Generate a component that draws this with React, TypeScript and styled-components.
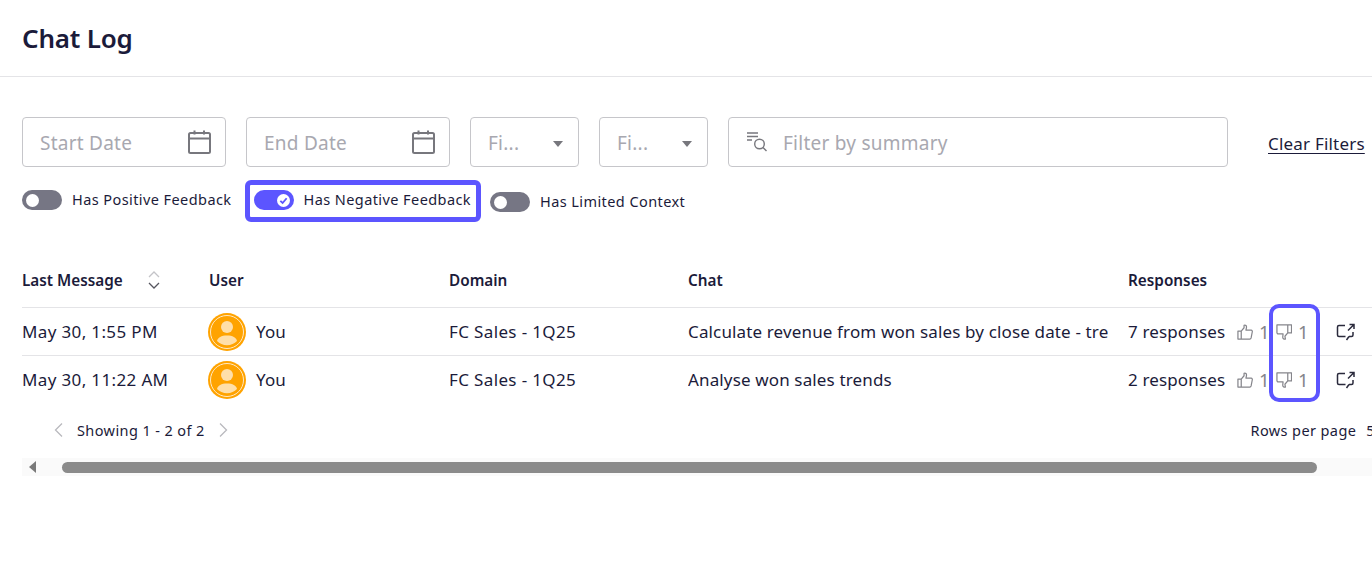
import React from 'react';
import styled, { createGlobalStyle } from 'styled-components';

const colors = {
  ink: '#1b1b3a',
  line: '#e4e4e7',
  border: '#c6c6ca',
  placeholder: '#a8a8b0',
  icon: '#77777d',
  count: '#85858b',
  toggle: '#767684',
  accent: '#5c55ff',
  orange: '#ffa300',
  peach: '#ffdfa9',
};

const GlobalStyle = createGlobalStyle`
  html, body {
    margin: 0;
    padding: 0;
    background: #fff;
    overflow: hidden;
  }
  body {
    font-family: "Noto Sans", "Liberation Sans", sans-serif;
    color: ${colors.ink};
  }
`;

const Page = styled.div`
  width: 1372px;
  height: 563px;
  overflow: hidden;
`;

const Header = styled.header`
  display: flex;
  align-items: center;
  height: 76px;
  padding: 0 22px;
  border-bottom: 1px solid ${colors.line};
`;

const Title = styled.h1`
  margin: 0;
  font-size: 26px;
  font-weight: 600;
  letter-spacing: -0.2px;
  color: ${colors.ink};
`;

const Content = styled.main`
  padding: 40px 0 0 22px;
`;

const FilterRow = styled.div`
  display: flex;
  align-items: center;
  gap: 20px;
  height: 50px;
`;

const Field = styled.div<{ $width: number }>`
  display: flex;
  align-items: center;
  box-sizing: border-box;
  width: ${(p) => p.$width}px;
  height: 50px;
  padding: 0 14px 0 17px;
  border: 1px solid ${colors.border};
  border-radius: 4px;
  font-size: 19px;
  letter-spacing: 0.25px;
  color: ${colors.placeholder};
`;

const FieldText = styled.span`
  flex: 1;
  padding-top: 2px;
  white-space: nowrap;
`;

const Caret = styled.span`
  width: 0;
  height: 0;
  margin: 3px 1px 0 0;
  border-left: 5px solid transparent;
  border-right: 5px solid transparent;
  border-top: 6px solid ${colors.icon};
`;

const CalendarSvg = styled.svg`
  flex: none;
  margin-top: -2px;
`;

const SummaryIcon = styled.svg`
  flex: none;
  margin-right: 15px;
`;

const ClearLink = styled.a`
  margin-left: 20px;
  padding-top: 2px;
  font-size: 17px;
  letter-spacing: 0.2px;
  color: ${colors.ink};
  text-decoration: underline;
  text-underline-offset: 3px;
  white-space: nowrap;
`;

const ToggleRow = styled.div`
  display: flex;
  align-items: flex-start;
  height: 77px;
  margin-top: 13px;
`;

const ToggleItem = styled.label<{ $highlight?: boolean; $drop?: number }>`
  display: flex;
  align-items: center;
  gap: 10px;
  box-sizing: border-box;
  height: ${(p) => (p.$highlight ? '42px' : '20px')};
  margin: ${(p) => (p.$highlight ? '0 9px 0 13px' : `${p.$drop ?? 10}px 0 0`)};
  padding: ${(p) => (p.$highlight ? '0 5px 2px 4px' : '0')};
  border: ${(p) => (p.$highlight ? `5px solid ${colors.accent}` : 'none')};
  border-radius: 6px;
  font-size: 14.5px;
  letter-spacing: 0.42px;
  white-space: nowrap;
`;

const ToggleLabel = styled.span`
  margin-top: -2px;
`;

const Track = styled.span<{ $on?: boolean }>`
  display: flex;
  align-items: center;
  justify-content: ${(p) => (p.$on ? 'flex-end' : 'flex-start')};
  box-sizing: border-box;
  width: 40px;
  height: 20px;
  padding: 0 4px;
  border-radius: 10px;
  background: ${(p) => (p.$on ? colors.accent : colors.toggle)};
`;

const Knob = styled.span`
  display: flex;
  align-items: center;
  justify-content: center;
  width: 13px;
  height: 13px;
  border-radius: 50%;
  background: #fff;
`;

const TableArea = styled.div`
  position: relative;
  width: 1350px;
`;

const Table = styled.div`
  width: 1350px;
`;

const Row = styled.div<{ $head?: boolean }>`
  display: grid;
  grid-template-columns: 187px 240px 239px 440px 244px;
  align-items: center;
  height: ${(p) => (p.$head ? '45px' : '47px')};
  padding-bottom: ${(p) => (p.$head ? '5px' : '0')};
  border-bottom: 1px solid ${colors.line};
  font-size: ${(p) => (p.$head ? '15.3px' : '17px')};
  font-weight: ${(p) => (p.$head ? 600 : 400)};
  letter-spacing: ${(p) => (p.$head ? '0' : '0.14px')};

  &:last-child {
    border-bottom-color: transparent;
  }
`;

const HeadCell = styled.div`
  display: flex;
  align-items: center;
  white-space: nowrap;
`;

const SortIcon = styled.svg`
  margin-left: 24px;
`;

const WideCell = styled.div`
  letter-spacing: 0.36px;
`;

const UserCell = styled.div`
  display: flex;
  align-items: center;
  gap: 10px;
  margin-left: -1px;
`;

const ChatCell = styled.div`
  width: 420px;
  overflow: hidden;
  white-space: nowrap;
`;

const ResponsesCell = styled.div`
  display: flex;
  align-items: center;
  white-space: nowrap;
`;

const Count = styled.span<{ $width: number }>`
  display: flex;
  align-items: center;
  gap: 6px;
  width: ${(p) => p.$width}px;
  color: ${colors.count};
  font-size: 18.5px;
`;

const ResponseText = styled.span`
  width: 109px;
`;

const OpenButton = styled.svg`
  margin-left: 24px;
  flex: none;
`;

const ColumnHighlight = styled.div`
  position: absolute;
  left: 1247px;
  top: 47px;
  width: 51px;
  height: 98px;
  box-sizing: border-box;
  border: 4px solid ${colors.accent};
  border-radius: 10px;
`;

const Pager = styled.div`
  display: flex;
  align-items: center;
  height: 52px;
  margin-right: -3px;
  padding-left: 31px;
  font-size: 14.5px;
  letter-spacing: 0.4px;
  white-space: nowrap;
`;

const PagerText = styled.span`
  margin: 0 12px;
`;

const RowsPerPage = styled.span`
  display: flex;
  gap: 10px;
  margin-left: auto;
`;

const Scrollbar = styled.div`
  display: flex;
  align-items: center;
  height: 18px;
  margin-top: 2px;
  background: #fafafa;
`;

const ScrollArrow = styled.span`
  width: 0;
  height: 0;
  margin-left: 7px;
  border-top: 6px solid transparent;
  border-bottom: 6px solid transparent;
  border-right: 7px solid #7a7a7a;
`;

const ScrollThumb = styled.span`
  width: 1255px;
  height: 11px;
  margin-left: 26px;
  border-radius: 6px;
  background: #8b8b8b;
`;

const CalendarIcon = () => (
  <CalendarSvg width="24" height="25" viewBox="0 0 24 25" fill="none" stroke={colors.icon} strokeWidth="2">
    <rect x="2" y="4" width="21" height="20" rx="1.500" />
    <path d="M2 9.500h21M7.500 1.500v4M17 1.500v4" />
  </CalendarSvg>
);

const CheckMark = () => (
  <svg width="9" height="9" viewBox="0 0 10 10" fill="none" stroke={colors.accent} strokeWidth="2">
    <path d="M1.500 5.500 4 7.800 8.500 2.500" />
  </svg>
);

const ThumbUp = () => (
  <svg width="16" height="16" viewBox="0 0 17 17" fill="none" stroke={colors.count} strokeWidth="1.300" strokeLinejoin="round">
    <path d="M1 7.500h3.500V16H1zM4.500 7.500 7.500 4V1.500C9 .8 10.500 1.800 10 4L9.500 6.500h5.500c1 0 1.500 1 1.200 2L15 14.800c-.2.800-.8 1.200-1.500 1.200H4.500" />
  </svg>
);

const ThumbDown = () => (
  <svg width="16" height="16" viewBox="0 0 17 17" fill="none" stroke={colors.count} strokeWidth="1.300" strokeLinejoin="round">
    <path d="M1 1h11.500v8.500l-3 3.500 .5 3c-1.500.6-3-.4-2.800-2.400L7.500 10.500H2.500c-1 0-1.700-1-1.500-2zM12.500 1H16.500v8.500H12.500" />
  </svg>
);

const OpenChat = () => (
  <OpenButton width="20" height="20" viewBox="0 0 20 20" fill="none" stroke="#2a2a3c" strokeWidth="1.500">
    <path d="M9 3.500H3c-1 0-1.500.6-1.500 1.500v8c0 .9.500 1.500 1.500 1.500h6.500M13 14.500h2.500c1 0 1.500-.6 1.500-1.500v-3" />
    <path d="M13 14.500 10.500 18M12 8.500 18 2.500M13.500 2.500H18V7" />
  </OpenButton>
);

const Avatar = () => (
  <svg width="38" height="38" viewBox="0 0 38 38">
    <circle cx="19" cy="19" r="19" fill={colors.orange} />
    <circle cx="19" cy="19" r="16.500" fill={colors.orange} stroke="#ffe9c4" strokeWidth="1" />
    <circle cx="19" cy="14" r="6" fill={colors.peach} />
    <path d="M9 28c.6-3.500 4.500-5.500 10-5.500s9.400 2 10 5.500c-2.500 2.500-6 4.200-10 4.200s-7.500-1.700-10-4.200z" fill={colors.peach} />
  </svg>
);

interface ChatRow {
  date: string;
  chat: string;
  responses: string;
}

const chatRows: ChatRow[] = [
  { date: 'May 30, 1:55 PM', chat: 'Calculate revenue from won sales by close date - tre', responses: '7 responses' },
  { date: 'May 30, 11:22 AM', chat: 'Analyse won sales trends', responses: '2 responses' },
];

const App: React.FC = () => {
  return (
    <Page>
      <GlobalStyle />
      <Header>
        <Title>Chat Log</Title>
      </Header>
      <Content>
        <FilterRow>
          <Field $width={204}>
            <FieldText>Start Date</FieldText>
            <CalendarIcon />
          </Field>
          <Field $width={204}>
            <FieldText>End Date</FieldText>
            <CalendarIcon />
          </Field>
          <Field $width={109}>
            <FieldText>Fi...</FieldText>
            <Caret />
          </Field>
          <Field $width={109}>
            <FieldText>Fi...</FieldText>
            <Caret />
          </Field>
          <Field $width={500}>
            <SummaryIcon width="22" height="22" viewBox="0 0 22 22" fill="none" stroke={colors.icon} strokeWidth="1.400">
              <path d="M1 2h11M1 5.500h11M1 9h5" />
              <circle cx="13.500" cy="13" r="4.800" />
              <path d="M17 16.500 20.500 20" />
            </SummaryIcon>
            <FieldText>Filter by summary</FieldText>
          </Field>
          <ClearLink>Clear Filters</ClearLink>
        </FilterRow>
        <ToggleRow>
          <ToggleItem>
            <Track><Knob /></Track>
            <ToggleLabel>Has Positive Feedback</ToggleLabel>
          </ToggleItem>
          <ToggleItem $highlight>
            <Track $on><Knob><CheckMark /></Knob></Track>
            <ToggleLabel>Has Negative Feedback</ToggleLabel>
          </ToggleItem>
          <ToggleItem $drop={12}>
            <Track><Knob /></Track>
            <ToggleLabel>Has Limited Context</ToggleLabel>
          </ToggleItem>
        </ToggleRow>
        <TableArea>
          <Table>
            <Row $head>
              <HeadCell>
                Last Message
                <SortIcon width="14" height="20" viewBox="0 0 14 20" fill="none" strokeWidth="1.300">
                  <path d="M2 7 7 2l5 5" stroke="#c4c4c8" />
                  <path d="M2 13l5 5 5-5" stroke="#55555f" />
                </SortIcon>
              </HeadCell>
              <HeadCell>User</HeadCell>
              <HeadCell>Domain</HeadCell>
              <HeadCell>Chat</HeadCell>
              <HeadCell>Responses</HeadCell>
            </Row>
            {chatRows.map((row) => (
              <Row key={row.date}>
                <WideCell>{row.date}</WideCell>
                <UserCell>
                  <Avatar />
                  You
                </UserCell>
                <WideCell>FC Sales - 1Q25</WideCell>
                <ChatCell>{row.chat}</ChatCell>
                <ResponsesCell>
                  <ResponseText>{row.responses}</ResponseText>
                  <Count $width={39}>
                    <ThumbUp />1
                  </Count>
                  <Count $width={36}>
                    <ThumbDown />1
                  </Count>
                  <OpenChat />
                </ResponsesCell>
              </Row>
            ))}
          </Table>
          <ColumnHighlight />
          <Pager>
            <svg width="12" height="16" viewBox="0 0 12 16" fill="none" stroke="#b9b9be" strokeWidth="1.300">
              <path d="M9 1.500 2.500 8 9 14.500" />
            </svg>
            <PagerText>Showing 1 - 2 of 2</PagerText>
            <svg width="12" height="16" viewBox="0 0 12 16" fill="none" stroke="#b9b9be" strokeWidth="1.300">
              <path d="M3 1.500 9.500 8 3 14.500" />
            </svg>
            <RowsPerPage>
              Rows per page
              <span>5</span>
            </RowsPerPage>
          </Pager>
          <Scrollbar>
            <ScrollArrow />
            <ScrollThumb />
          </Scrollbar>
        </TableArea>
      </Content>
    </Page>
  );
};

export default App;
